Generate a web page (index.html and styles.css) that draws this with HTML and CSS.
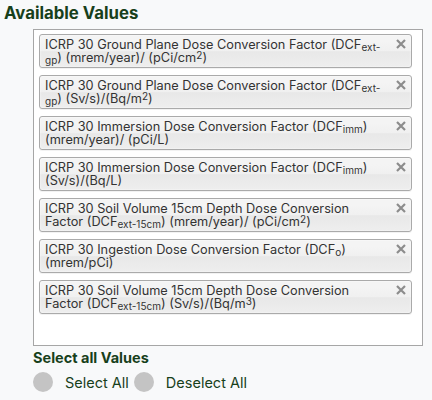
FILE: index.html
```html
<!DOCTYPE html>
<html>
<head>
<meta charset="utf-8">
<link rel="stylesheet" href="styles.css">
</head>
<body>
<div class="page">
  <h2 class="title">Available Values</h2>
  <div class="field">
    <ul class="choices">
      <li class="choice"><span class="txt">ICRP 30 Ground Plane Dose Conversion Factor (DCF<sub>ext-gp</sub>) (mrem/year)/ (pCi/cm<sup>2</sup>)</span><span class="close"><svg viewBox="0 0 10 10" width="10" height="10"><path d="M1 1 L9 9 M9 1 L1 9"/></svg></span></li>
      <li class="choice"><span class="txt">ICRP 30 Ground Plane Dose Conversion Factor (DCF<sub>ext-gp</sub>) (Sv/s)/(Bq/m<sup>2</sup>)</span><span class="close"><svg viewBox="0 0 10 10" width="10" height="10"><path d="M1 1 L9 9 M9 1 L1 9"/></svg></span></li>
      <li class="choice"><span class="txt">ICRP 30 Immersion Dose Conversion Factor (DCF<sub>imm</sub>) (mrem/year)/ (pCi/L)</span><span class="close"><svg viewBox="0 0 10 10" width="10" height="10"><path d="M1 1 L9 9 M9 1 L1 9"/></svg></span></li>
      <li class="choice"><span class="txt">ICRP 30 Immersion Dose Conversion Factor (DCF<sub>imm</sub>) (Sv/s)/(Bq/L)</span><span class="close"><svg viewBox="0 0 10 10" width="10" height="10"><path d="M1 1 L9 9 M9 1 L1 9"/></svg></span></li>
      <li class="choice"><span class="txt">ICRP 30 Soil Volume 15cm Depth Dose Conversion Factor (DCF<sub>ext-15cm</sub>) (mrem/year)/ (pCi/cm<sup>2</sup>)</span><span class="close"><svg viewBox="0 0 10 10" width="10" height="10"><path d="M1 1 L9 9 M9 1 L1 9"/></svg></span></li>
      <li class="choice"><span class="txt">ICRP 30 Ingestion Dose Conversion Factor (DCF<sub>o</sub>) (mrem/pCi)</span><span class="close"><svg viewBox="0 0 10 10" width="10" height="10"><path d="M1 1 L9 9 M9 1 L1 9"/></svg></span></li>
      <li class="choice"><span class="txt">ICRP 30 Soil Volume 15cm Depth Dose Conversion Factor (DCF<sub>ext-15cm</sub>) (Sv/s)/(Bq/m<sup>3</sup>)</span><span class="close"><svg viewBox="0 0 10 10" width="10" height="10"><path d="M1 1 L9 9 M9 1 L1 9"/></svg></span></li>
    </ul>
  </div>
  <div class="select-all">
    <div class="sa-label">Select all Values</div>
    <div class="radios">
      <label class="radio"><span class="dot"></span><span class="rtext">Select All</span></label>
      <label class="radio"><span class="dot"></span><span class="rtext">Deselect All</span></label>
    </div>
  </div>
</div>
</body>
</html>
```
FILE: styles.css
```css
html, body {
  margin: 0;
  padding: 0;
  background: #f8f9fa;
}
.page {
  width: 432px;
  height: 400px;
  overflow: hidden;
  font-family: Inter, "Liberation Sans", sans-serif;
}
.title {
  margin: 0;
  padding: 3px 0 0 4px;
  font-size: 16.75px;
  line-height: 20px;
  font-weight: 700;
  color: #17401b;
}
.field {
  margin: 6px 0 0 33px;
  width: 390px;
  height: 317px;
  box-sizing: border-box;
  border: 1px solid #a6a6a6;
  background: #fff;
}
.choices {
  list-style: none;
  margin: 0;
  padding: 4px 10px 0 5px;
  display: flex;
  flex-direction: column;
  gap: 7px;
}
.choice {
  position: relative;
  box-sizing: border-box;
  border: 1px solid #aaa;
  border-radius: 3px;
  background-image: linear-gradient(#f4f4f4 20%, #f0f0f0 50%, #e8e8e8 52%, #eee 100%);
  box-shadow: 0 0 2px #fff inset, 0 1px 0 rgba(0,0,0,0.05);
  padding: 3px 25px 3px 5px;
  font-size: 12.75px;
  line-height: 13px;
  color: #333;
  min-height: 34px;
}
.txt sub, .txt sup {
  font-size: 10px;
  line-height: 0;
}
.txt sub {
  vertical-align: -2px;
}
.txt sup {
  vertical-align: 3px;
}
.close {
  position: absolute;
  top: 4px;
  right: 5px;
  width: 10px;
  height: 10px;
}
.close svg {
  display: block;
  stroke: #8c8c8c;
  stroke-width: 2.2;
  fill: none;
}
.select-all {
  margin: 4px 0 0 33px;
}
.sa-label {
  font-size: 14.5px;
  line-height: 16px;
  font-weight: 700;
  color: #17401b;
}
.radios {
  display: flex;
  align-items: center;
  margin-top: 6px;
}
.radio {
  display: flex;
  align-items: center;
}
.dot {
  width: 20px;
  height: 20px;
  border-radius: 50%;
  background: #c4c4c4;
  margin-right: 12px;
}
.rtext {
  font-size: 14.5px;
  color: #17401b;
  margin-right: 5px;
}
```
